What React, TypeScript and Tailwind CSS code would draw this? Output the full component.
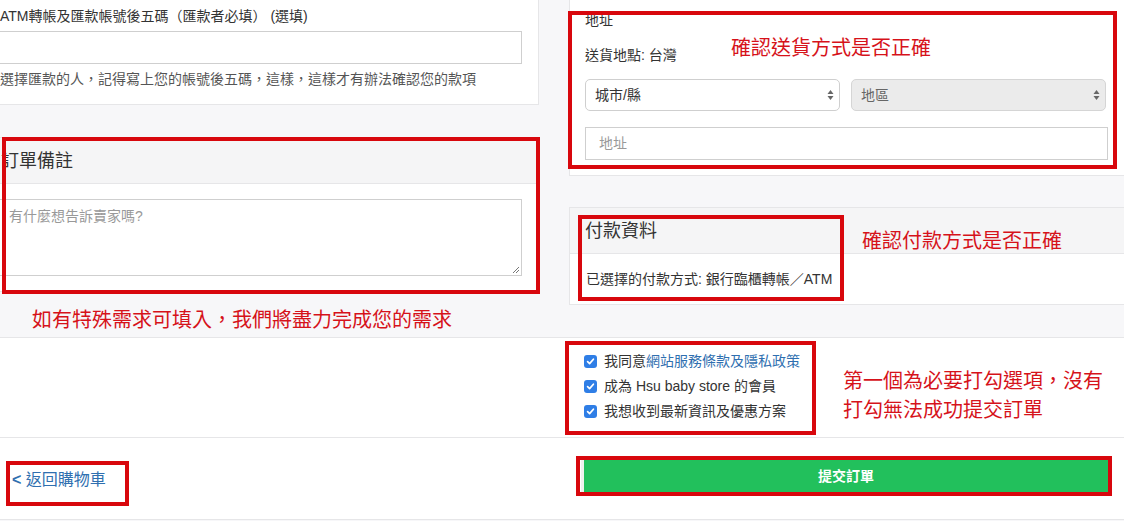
import React from "react";

const font = { fontFamily: '"Liberation Sans", "Noto Sans CJK TC", sans-serif' };

function Arrows() {
  return (
    <svg width="7" height="12" viewBox="0 0 7 12" className="shrink-0">
      <path d="M3.5 1 L6.5 5 L0.5 5 Z" fill="#666" />
      <path d="M3.5 11 L6.5 7 L0.5 7 Z" fill="#666" />
    </svg>
  );
}

function Check() {
  return (
    <span className="w-[13px] h-[13px] rounded-[3px] bg-[#2f7ee6] flex items-center justify-center shrink-0">
      <svg width="9" height="9" viewBox="0 0 9 9">
        <path d="M1.6 4.7 L3.6 6.6 L7.4 2.2" stroke="white" strokeWidth="1.7" fill="none" strokeLinecap="round" strokeLinejoin="round" />
      </svg>
    </span>
  );
}

export default function App() {
  return (
    <div className="relative w-[1124px] h-[521px] overflow-hidden bg-[#f7f7f9] text-[#333]" style={font}>
      {/* top area */}
      <div className="flex h-[337px]">
        {/* left column */}
        <div className="w-[539px] shrink-0 flex flex-col">
          <div className="h-[105px] bg-white border-r border-b border-[#e6e6e8] flex flex-col">
            <div className="mt-[6px] text-[14px] leading-[20px]">ATM轉帳及匯款帳號後五碼（匯款者必填） (選填)</div>
            <div className="mt-[5px] ml-[-1px] w-[523px] h-[33px] border border-[#cfcfcf] bg-white" />
            <div className="mt-[5px] text-[14px] leading-[20px] text-[#555]">選擇匯款的人，記得寫上您的帳號後五碼，這樣，這樣才有辦法確認您的款項</div>
          </div>
          <div className="mt-[32px] w-[537px] h-[155px] bg-white border border-l-0 border-[#e6e6e8] flex flex-col">
            <div className="h-[46px] bg-[#f5f5f6] border-b border-[#e6e6e8] flex items-center">
              <span className="ml-[1px] text-[18px] leading-[24px]">訂單備註</span>
            </div>
            <div className="pt-[15px]">
              <div className="ml-[-1px] w-[523px] h-[77px] border border-[#cfcfcf] bg-white relative">
                <div className="pl-[9px] pt-[6px] text-[14px] leading-[20px] text-[#999]">有什麼想告訴賣家嗎?</div>
                <svg width="8" height="8" viewBox="0 0 8 8" className="absolute right-[1px] bottom-[1px]">
                  <path d="M7 1 L1 7 M7 4 L4 7" stroke="#777" strokeWidth="1" />
                </svg>
              </div>
            </div>
          </div>
          <div className="mt-[14px] ml-[32px] text-[20px] leading-[28px] text-[#d6121a]">如有特殊需求可填入，我們將盡力完成您的需求</div>
        </div>

        {/* right column */}
        <div className="ml-[30px] flex-1 flex flex-col">
          <div className="h-[176px] bg-white border-l border-b border-[#e6e6e8] pl-[15px] pr-[16px] flex flex-col">
            <div className="mt-[10px] text-[14px] leading-[20px]">地址</div>
            <div className="mt-[15px] text-[14px] leading-[20px]">送貨地點: 台灣</div>
            <div className="mt-[14px] flex gap-[11px]">
              <div className="w-[255px] h-[32px] rounded-[5px] border border-[#cfcfcf] bg-white flex items-center justify-between pl-[9px] pr-[5px] text-[14px]">
                <span>城市/縣</span>
                <Arrows />
              </div>
              <div className="w-[255px] h-[32px] rounded-[5px] border border-[#d5d5d5] bg-[#ebebeb] flex items-center justify-between pl-[9px] pr-[5px] text-[14px] text-[#666]">
                <span>地區</span>
                <Arrows />
              </div>
            </div>
            <div className="mt-[16px] w-[523px] h-[33px] border border-[#cfcfcf] bg-white flex items-center pl-[13px] text-[14px] text-[#999]">地址</div>
          </div>
          <div className="mt-[31px] h-[98px] bg-white border-l border-t border-b border-[#e6e6e8] flex flex-col">
            <div className="h-[46px] bg-[#f5f5f6] border-b border-[#e6e6e8] flex items-center pl-[15px]">
              <span className="text-[18px] leading-[24px]">付款資料</span>
            </div>
            <div className="pl-[16px] pt-[15px] text-[14px] leading-[20px]">已選擇的付款方式: 銀行臨櫃轉帳／ATM</div>
          </div>
        </div>
      </div>

      {/* agreement section */}
      <div className="h-[100px] bg-white border-t border-[#e6e6e8] pl-[584px] pt-[11px] flex flex-col text-[14px]">
        <div className="h-[25px] flex items-center gap-[7px]">
          <Check />
          <span>我同意<span className="text-[#2f6fb0]">網站服務條款及隱私政策</span></span>
        </div>
        <div className="h-[25px] flex items-center gap-[7px]">
          <Check />
          <span>成為 Hsu baby store 的會員</span>
        </div>
        <div className="h-[25px] flex items-center gap-[7px]">
          <Check />
          <span>我想收到最新資訊及優惠方案</span>
        </div>
      </div>

      {/* bottom bar */}
      <div className="h-[83px] bg-white border-t border-b border-[#e6e6e8] flex items-start">
        <div className="mt-[32px] ml-[12px] text-[16px] leading-[20px] text-[#2f6fb0]">
          <span className="font-bold">&lt;</span> 返回購物車
        </div>
        <div className="ml-auto mr-[16px] mt-[22px] w-[527px] h-[32px] bg-[#22c05c] border-l-[3px] border-[#eef2ee] flex items-center justify-center text-white font-bold text-[14px]">
          提交訂單
        </div>
      </div>

      {/* annotation overlays */}
      <div className="absolute left-[731px] top-[34px] text-[20px] leading-[28px] text-[#d6121a]">確認送貨方式是否正確</div>
      <div className="absolute left-[862px] top-[227px] text-[20px] leading-[28px] text-[#d6121a]">確認付款方式是否正確</div>
      <div className="absolute left-[843px] top-[367px] text-[20px] leading-[29px] text-[#d6121a]">
        <div>第一個為必要打勾選項，沒有</div>
        <div>打勾無法成功提交訂單</div>
      </div>

      <div className="absolute left-[568px] top-[11px] w-[549px] h-[158px] border-4 border-[#d8070d]" />
      <div className="absolute left-[2px] top-[137px] w-[538px] h-[157px] border-4 border-[#d8070d]" />
      <div className="absolute left-[578px] top-[215px] w-[266px] h-[86px] border-4 border-[#d8070d]" />
      <div className="absolute left-[565px] top-[341px] w-[251px] h-[94px] border-4 border-[#d8070d]" />
      <div className="absolute left-[6px] top-[461px] w-[123px] h-[45px] border-4 border-[#d8070d]" />
      <div className="absolute left-[576px] top-[456px] w-[536px] h-[40px] border-4 border-[#d8070d]" />
    </div>
  );
}
